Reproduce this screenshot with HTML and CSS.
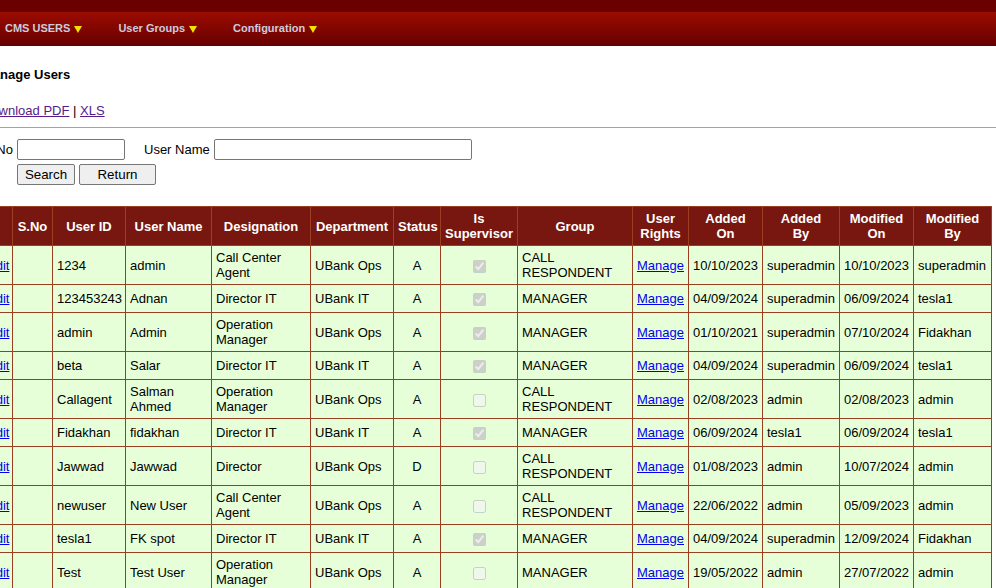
FILE: index.html
```html
<!DOCTYPE html>
<html>
<head>
<meta charset="utf-8">
<title>Manage Users</title>
<link rel="stylesheet" href="styles.css">
</head>
<body>
<div class="topband"></div>
<nav class="menubar">
  <span class="menu-item">CMS USERS <span class="caret"></span></span>
  <span class="menu-item">User Groups <span class="caret"></span></span>
  <span class="menu-item">Configuration <span class="caret"></span></span>
</nav>
<div class="page">
  <div class="title">Manage Users</div>
  <div class="exports"><a href="#" class="visited">Download PDF</a> | <a href="#" class="visited">XLS</a></div>
  <hr class="rule">
  <form class="search">
    <div class="search-row">
      <label class="lbl-no">Emp No</label>
      <input type="text" class="in-no">
      <label class="lbl-name">User Name</label>
      <input type="text" class="in-name">
    </div>
    <div class="button-row">
      <button type="button" class="btn btn-search">Search</button>
      <button type="button" class="btn btn-return">Return</button>
    </div>
  </form>
  <table class="grid">
    <colgroup>
      <col class="c-edit"><col class="c-sno"><col class="c-uid"><col class="c-uname"><col class="c-desig"><col class="c-dept"><col class="c-status"><col class="c-sup"><col class="c-group"><col class="c-rights"><col class="c-aon"><col class="c-aby"><col class="c-mon"><col class="c-mby">
    </colgroup>
    <thead>
      <tr>
        <th></th><th>S.No</th><th>User ID</th><th>User Name</th><th>Designation</th><th>Department</th><th>Status</th><th>Is Supervisor</th><th>Group</th><th>User Rights</th><th>Added<br>On</th><th>Added<br>By</th><th>Modified On</th><th>Modified By</th>
      </tr>
    </thead>
    <tbody>
      <tr><td><a href="#">Edit</a></td><td></td><td>1234</td><td>admin</td><td>Call Center Agent</td><td>UBank Ops</td><td class="ctr">A</td><td class="ctr"><input type="checkbox" checked disabled></td><td>CALL RESPONDENT</td><td><a href="#">Manage</a></td><td>10/10/2023</td><td>superadmin</td><td>10/10/2023</td><td>superadmin</td></tr>
      <tr><td><a href="#">Edit</a></td><td></td><td>123453243</td><td>Adnan</td><td>Director IT</td><td>UBank IT</td><td class="ctr">A</td><td class="ctr"><input type="checkbox" checked disabled></td><td>MANAGER</td><td><a href="#">Manage</a></td><td>04/09/2024</td><td>superadmin</td><td>06/09/2024</td><td>tesla1</td></tr>
      <tr><td><a href="#">Edit</a></td><td></td><td>admin</td><td>Admin</td><td>Operation Manager</td><td>UBank Ops</td><td class="ctr">A</td><td class="ctr"><input type="checkbox" checked disabled></td><td>MANAGER</td><td><a href="#">Manage</a></td><td>01/10/2021</td><td>superadmin</td><td>07/10/2024</td><td>Fidakhan</td></tr>
      <tr><td><a href="#">Edit</a></td><td></td><td>beta</td><td>Salar</td><td>Director IT</td><td>UBank IT</td><td class="ctr">A</td><td class="ctr"><input type="checkbox" checked disabled></td><td>MANAGER</td><td><a href="#">Manage</a></td><td>04/09/2024</td><td>superadmin</td><td>06/09/2024</td><td>tesla1</td></tr>
      <tr><td><a href="#">Edit</a></td><td></td><td>Callagent</td><td>Salman Ahmed</td><td>Operation Manager</td><td>UBank Ops</td><td class="ctr">A</td><td class="ctr"><input type="checkbox" disabled></td><td>CALL RESPONDENT</td><td><a href="#">Manage</a></td><td>02/08/2023</td><td>admin</td><td>02/08/2023</td><td>admin</td></tr>
      <tr><td><a href="#">Edit</a></td><td></td><td>Fidakhan</td><td>fidakhan</td><td>Director IT</td><td>UBank IT</td><td class="ctr">A</td><td class="ctr"><input type="checkbox" checked disabled></td><td>MANAGER</td><td><a href="#">Manage</a></td><td>06/09/2024</td><td>tesla1</td><td>06/09/2024</td><td>tesla1</td></tr>
      <tr><td><a href="#">Edit</a></td><td></td><td>Jawwad</td><td>Jawwad</td><td>Director</td><td>UBank Ops</td><td class="ctr">D</td><td class="ctr"><input type="checkbox" disabled></td><td>CALL RESPONDENT</td><td><a href="#">Manage</a></td><td>01/08/2023</td><td>admin</td><td>10/07/2024</td><td>admin</td></tr>
      <tr><td><a href="#">Edit</a></td><td></td><td>newuser</td><td>New User</td><td>Call Center Agent</td><td>UBank Ops</td><td class="ctr">A</td><td class="ctr"><input type="checkbox" disabled></td><td>CALL RESPONDENT</td><td><a href="#">Manage</a></td><td>22/06/2022</td><td>admin</td><td>05/09/2023</td><td>admin</td></tr>
      <tr><td><a href="#">Edit</a></td><td></td><td>tesla1</td><td>FK spot</td><td>Director IT</td><td>UBank IT</td><td class="ctr">A</td><td class="ctr"><input type="checkbox" checked disabled></td><td>MANAGER</td><td><a href="#">Manage</a></td><td>04/09/2024</td><td>superadmin</td><td>12/09/2024</td><td>Fidakhan</td></tr>
      <tr><td><a href="#">Edit</a></td><td></td><td>Test</td><td>Test User</td><td>Operation Manager</td><td>UBank Ops</td><td class="ctr">A</td><td class="ctr"><input type="checkbox" disabled></td><td>MANAGER</td><td><a href="#">Manage</a></td><td>19/05/2022</td><td>admin</td><td>27/07/2022</td><td>admin</td></tr>
    </tbody>
  </table>
</div>
</body>
</html>
```
FILE: styles.css
```css
html, body {
  overflow: hidden;
}
body {
  margin: 0;
  font-family: Arial, "Liberation Sans", sans-serif;
  font-size: 13px;
  color: #000;
  background: #fff;
}
a { color: #0000ee; }
a.visited { color: #551a8b; }

.topband {
  height: 12px;
  background: #6b0000;
}
.menubar {
  box-sizing: border-box;
  height: 34px;
  padding: 0 0 2px 5px;
  background: linear-gradient(#9c0c00, #650000);
  display: flex;
  align-items: center;
  gap: 36px;
}
.menu-item {
  color: #ccccdf;
  font-weight: bold;
  font-size: 11px;
  display: flex;
  align-items: center;
  gap: 4px;
}
.caret {
  width: 0;
  height: 0;
  border-left: 4px solid transparent;
  border-right: 4px solid transparent;
  border-top: 7px solid #f2e400;
  margin-top: 2px;
}

.page {
  margin-left: -18px;
}
.title {
  font-weight: bold;
  line-height: 15px;
  margin-top: 21px;
}
.exports {
  line-height: 15px;
  margin-top: 21px;
}
.rule {
  border: 0;
  border-top: 1px solid #a3a3a3;
  margin: 9px 0 0 0;
  height: 0;
}
.search {
  margin-top: 11px;
}
.search-row {
  display: flex;
  align-items: center;
}
.lbl-no {
  width: 31px;
  text-align: right;
  white-space: nowrap;
  direction: rtl;
  margin-right: 4px;
}
.lbl-name {
  margin-left: 19px;
  margin-right: 4px;
}
.search input {
  box-sizing: border-box;
  height: 21px;
  margin: 0;
  border: 1px solid #767676;
  border-radius: 2px;
  font: 13.33px Arial, "Liberation Sans", sans-serif;
}
.in-no { width: 108px; }
.in-name { width: 258px; }
.button-row {
  display: flex;
  gap: 4px;
  margin: 4px 0 0 35px;
}
.btn {
  box-sizing: border-box;
  height: 21px;
  margin: 0;
  padding: 0;
  font: 13.33px Arial, "Liberation Sans", sans-serif;
  color: #000;
  background: #efefef;
  border: 1px solid #767676;
  border-radius: 2px;
}
.btn-search { width: 58px; }
.btn-return { width: 77px; }

.grid {
  margin-top: 21px;
  border-collapse: collapse;
  table-layout: fixed;
  width: 1009px;
}
.c-edit { width: 30px; }
.c-sno { width: 40px; }
.c-uid { width: 73px; }
.c-uname { width: 86px; }
.c-desig { width: 99px; }
.c-dept { width: 83px; }
.c-status { width: 47px; }
.c-sup { width: 77px; }
.c-group { width: 115px; }
.c-rights { width: 56px; }
.c-aon { width: 74px; }
.c-aby { width: 77px; }
.c-mon { width: 74px; }
.c-mby { width: 78px; }

.grid th {
  background: #78170f;
  color: #fff;
  font-weight: bold;
  padding: 4px;
  border: 1px solid #9a3f22;
  line-height: 15px;
  text-align: center;
}
.grid td {
  background: #e6ffd8;
  padding: 4px;
  border: 1px solid #9a3f22;
  line-height: 15px;
  text-align: left;
}
.grid tbody tr {
  height: 28px;
}
.grid td.ctr {
  text-align: center;
}
.grid input[type="checkbox"] {
  margin: 0;
  vertical-align: middle;
}
```
